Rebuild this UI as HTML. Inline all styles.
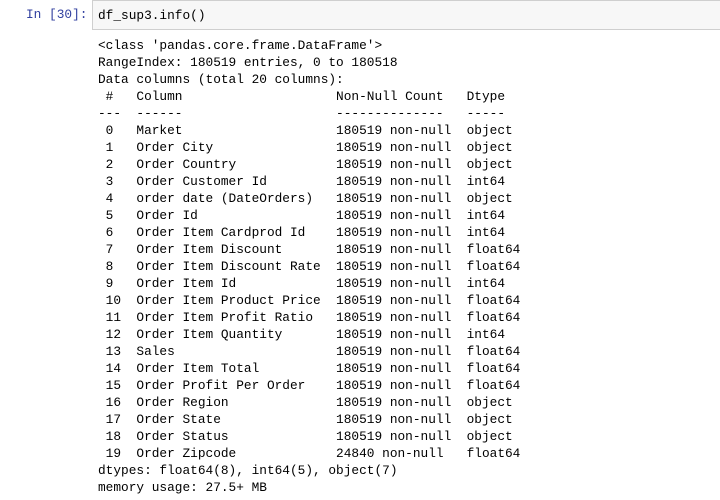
<!DOCTYPE html>
<html><head><style>
body{margin:0;width:720px;height:500px;background:#fff;overflow:hidden;position:relative;font-family:"Liberation Mono",monospace;}
.prompt{position:absolute;left:26px;top:6px;font-size:12.8px;line-height:17px;color:#303f9f;}
.inp{position:absolute;left:92px;top:0px;width:640px;height:30px;background:#f7f7f7;border:1px solid #cfcfcf;box-sizing:border-box;}
.code{position:absolute;left:98px;top:7px;font-size:12.8px;line-height:17px;color:#000;}
pre{position:absolute;left:98px;top:37px;margin:0;font-family:"Liberation Mono",monospace;font-size:12.8px;line-height:17px;color:#000;}
</style></head><body>
<div class="prompt">In [30]:</div>
<div class="inp"></div>
<div class="code">df_sup3.info()</div>
<pre>&lt;class 'pandas.core.frame.DataFrame'&gt;
RangeIndex: 180519 entries, 0 to 180518
Data columns (total 20 columns):
 #   Column                    Non-Null Count   Dtype  
---  ------                    --------------   -----  
 0   Market                    180519 non-null  object 
 1   Order City                180519 non-null  object 
 2   Order Country             180519 non-null  object 
 3   Order Customer Id         180519 non-null  int64  
 4   order date (DateOrders)   180519 non-null  object 
 5   Order Id                  180519 non-null  int64  
 6   Order Item Cardprod Id    180519 non-null  int64  
 7   Order Item Discount       180519 non-null  float64
 8   Order Item Discount Rate  180519 non-null  float64
 9   Order Item Id             180519 non-null  int64  
 10  Order Item Product Price  180519 non-null  float64
 11  Order Item Profit Ratio   180519 non-null  float64
 12  Order Item Quantity       180519 non-null  int64  
 13  Sales                     180519 non-null  float64
 14  Order Item Total          180519 non-null  float64
 15  Order Profit Per Order    180519 non-null  float64
 16  Order Region              180519 non-null  object 
 17  Order State               180519 non-null  object 
 18  Order Status              180519 non-null  object 
 19  Order Zipcode             24840 non-null   float64
dtypes: float64(8), int64(5), object(7)
memory usage: 27.5+ MB</pre>
</body></html>
